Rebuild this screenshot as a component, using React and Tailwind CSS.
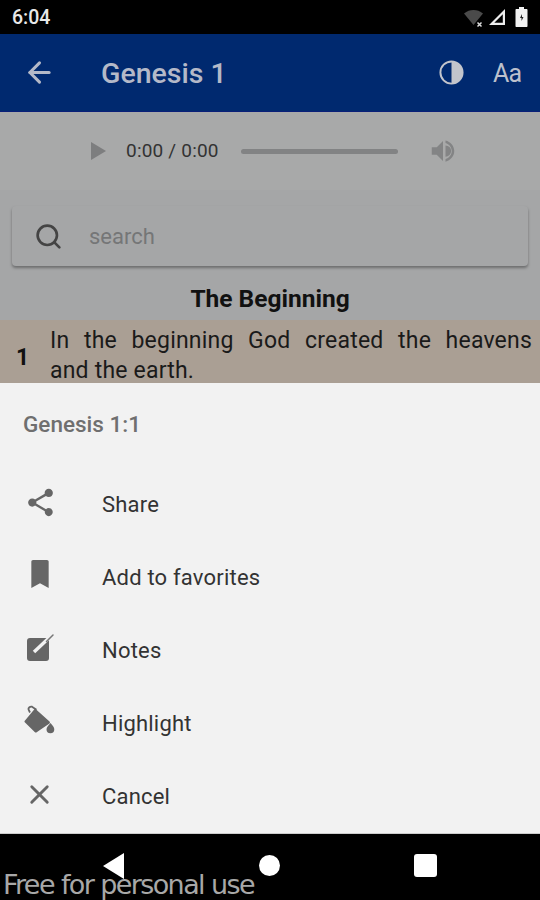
import { ArrowLeft, Search, X } from 'lucide-react';

const actions = [
  { label: 'Share', icon: <ShareIcon /> },
  { label: 'Add to favorites', icon: <BookmarkIcon /> },
  { label: 'Notes', icon: <NoteIcon /> },
  { label: 'Highlight', icon: <BucketIcon /> },
  { label: 'Cancel', icon: <X size={31} strokeWidth={2.2} className="text-[#666666]" /> },
];

function ShareIcon() {
  return (
    <svg width="33" height="33" viewBox="0 0 24 24" fill="#666666">
      <path d="M18 16.08c-.76 0-1.44.3-1.96.77L8.91 12.7c.05-.23.09-.46.09-.7s-.04-.47-.09-.7l7.05-4.11c.54.5 1.25.81 2.04.81 1.66 0 3-1.34 3-3s-1.34-3-3-3-3 1.34-3 3c0 .24.04.47.09.7L8.04 9.81C7.5 9.31 6.79 9 6 9c-1.66 0-3 1.34-3 3s1.34 3 3 3c.79 0 1.5-.31 2.04-.81l7.12 4.16c-.05.21-.08.43-.08.65 0 1.61 1.31 2.92 2.92 2.92s2.92-1.31 2.92-2.92-1.31-2.92-2.92-2.92z" />
    </svg>
  );
}

function BookmarkIcon() {
  return (
    <svg width="32" height="32" viewBox="0 0 24 24" fill="#666666" className="-mt-[3px]">
      <path d="M6.8 1.5h10.4c.8 0 1.3.6 1.3 1.3v19.7L12 19l-6.500 3.500V2.800c0-.7.5-1.300 1.300-1.300z" />
    </svg>
  );
}

function NoteIcon() {
  return (
    <svg width="32" height="32" viewBox="0 0 32 32">
      <rect x="3" y="5" width="22" height="23" rx="3" fill="#666666" />
      <path d="M10 19 27 3" stroke="#f2f2f2" strokeWidth="3.500" />
      <path d="M22.500 8.500 29 2" stroke="#777777" strokeWidth="1.500" strokeLinecap="round" />
    </svg>
  );
}

function BucketIcon() {
  return (
    <svg width="32" height="32" viewBox="0 0 32 32" fill="#666666" className="-mt-[3px]">
      <path d="M11 4.500 25.500 17.500c.6.600.6 1.300 0 1.900L13 28c-.8.7-1.600.7-2.300 0L1 18.500c-.7-.7-.7-1.400 0-2z" />
      <path d="M6 8.500 4.500 5.500c-.5-1.500 1.800-3.500 3.500-2.800l4.500 3" fill="none" stroke="#666666" strokeWidth="1.800" />
      <path d="M26.500 19c2 2.500 3.800 4.300 3.800 6.300a3.900 3.900 0 0 1-7.800 0c0-2 2-3.800 4-6.300z" />
    </svg>
  );
}

const App = () => {
  return (
    <div className="relative w-[540px] h-[900px] flex flex-col overflow-hidden bg-[#a5a6a7] font-['Roboto',sans-serif]">
      {/* status bar */}
      <div className="h-[34px] shrink-0 bg-black flex items-center justify-between pl-3 pr-[9px]">
        <span className="text-[#e8e8e8] text-[19.500px] leading-[36px] mt-[2px] font-medium">6:04</span>
        <div className="flex items-center gap-[3px]">
          <svg width="22" height="22" viewBox="0 0 22 22">
            <path d="M1 7.500C4 5 7 4 10.500 4s6.500 1 9.500 3.500L10.500 19z" fill="#4a4a4a" />
            <path d="m14.500 16.500 4 4m0-4-4 4" stroke="#dddddd" strokeWidth="1.500" />
          </svg>
          <svg width="18" height="18" viewBox="0 0 18 18">
            <path d="M17 1v16H1zM14.800 6.200 6.300 14.800h8.500z" fill="#eeeeee" fillRule="evenodd" />
          </svg>
          <svg width="18" height="22" viewBox="0 0 18 22" className="ml-1">
            <path d="M6 1h5v2h2.500c.6 0 1 .4 1 1v16c0 .6-.4 1-1 1h-10c-.6 0-1-.4-1-1V4c0-.6.4-1 1-1H6z" fill="#f2f2f2" />
            <path d="m9 8-2 4h1.500v3l2-4H9z" fill="#222222" />
          </svg>
        </div>
      </div>

      {/* app bar */}
      <div className="h-[78px] shrink-0 bg-[#00296f] border-b border-[#0a1f78] flex items-center text-[#b4b9c8]">
        <ArrowLeft size={33} strokeWidth={2.2} className="ml-[23px]" />
        <h1 className="ml-[45px] pt-[3px] text-[28.500px] font-medium">Genesis 1</h1>
        <svg width="27" height="27" viewBox="0 0 28 28" className="ml-auto">
          <circle cx="14" cy="14" r="11.500" fill="none" stroke="#c3c5cc" strokeWidth="2" />
          <path d="M14 2.500a11.500 11.500 0 0 1 0 23z" fill="#c3c5cc" />
        </svg>
        <span className="ml-[28px] mr-[19px] pt-[3px] text-[25px] tracking-[-1px] text-[#bcc0cc]">Aa</span>
      </div>

      {/* audio player */}
      <div className="h-[78px] shrink-0 flex items-center bg-[#a8a9a9]">
        <span className="ml-[91px] w-0 h-0 border-y-[9px] border-y-transparent border-l-[15px] border-l-[#7d7e7f]" />
        <span className="ml-[20px] text-[#333333] text-[19px] tracking-[0.2px]">0:00 / 0:00</span>
        <span className="ml-[22px] w-[157px] h-[5px] rounded-full bg-[#828384]" />
        <svg width="30" height="30" viewBox="0 0 24 24" fill="#838485" className="ml-[30px]">
          <path d="M3 9v6h4l5 5V4L7 9H3z" />
          <path d="M14 7.500v9a4.500 4.500 0 0 0 0-9z" />
          <path d="M14 3.500v2c2.900.9 5 3.500 5 6.500s-2.100 5.600-5 6.500v2c4-.9 7-4.400 7-8.500s-3-7.600-7-8.500z" />
        </svg>
      </div>

      {/* search */}
      <div className="mx-3 mt-4 h-[60px] shrink-0 flex items-center bg-[#a5a6a7] rounded-sm shadow-[0_2px_3px_rgba(0,0,0,0.35)]">
        <Search size={29} strokeWidth={2.2} className="ml-[22px] text-[#444444]" />
        <span className="ml-[26px] text-[22px] text-[#757677]">search</span>
      </div>

      <h2 className="mt-[17px] h-[37px] shrink-0 text-center text-[24.500px] font-bold leading-[32px] text-[#111111]">
        The Beginning
      </h2>

      {/* selected verse */}
      <div className="h-[63px] shrink-0 bg-[#aa9f94] flex overflow-hidden">
        <span className="w-[50px] pl-[16px] pt-[21px] text-[23px] font-bold text-[#111111]">1</span>
        <div className="w-[482px] text-[23px] tracking-[0.2px] leading-[30px] text-[#1a1a1a] pt-[6px]">
          <p className="[text-align-last:justify]">In the beginning God created the heavens</p>
          <p>and the earth.</p>
        </div>
      </div>

      {/* bottom sheet */}
      <div className="h-[450px] shrink-0 bg-[#f2f2f2] flex flex-col">
        <div className="h-[83px] shrink-0 pl-[23px] pt-[29px] text-[22.500px] font-medium leading-6 text-[#6f6f6f]">
          Genesis 1:1
        </div>
        {actions.map((action) => (
          <div key={action.label} className="h-[73px] shrink-0 flex items-center">
            <div className="w-[102px] pl-6 flex items-center">{action.icon}</div>
            <span className="pt-[3px] text-[22px] text-[#333333] tracking-[0.2px]">{action.label}</span>
          </div>
        ))}
      </div>

      {/* nav bar */}
      <div className="flex-1 bg-black border-t border-[#cccccc] flex items-center">
        <span className="ml-[103px] -mt-[3px] w-0 h-0 border-y-[13px] border-y-transparent border-r-[21px] border-r-white" />
        <span className="ml-[135px] -mt-[3px] w-[21px] h-[21px] rounded-full bg-white" />
        <span className="ml-[134px] -mt-[3px] w-[23px] h-[23px] rounded-[3px] bg-white" />
      </div>

      {/* watermark */}
      <span className="absolute left-[3px] top-[867px] text-[27px] leading-[36px] text-[#a8a8a8] font-['DejaVu_Sans',sans-serif] tracking-[-1.600px]">
        Free for personal use
      </span>
    </div>
  );
};

export default App;
